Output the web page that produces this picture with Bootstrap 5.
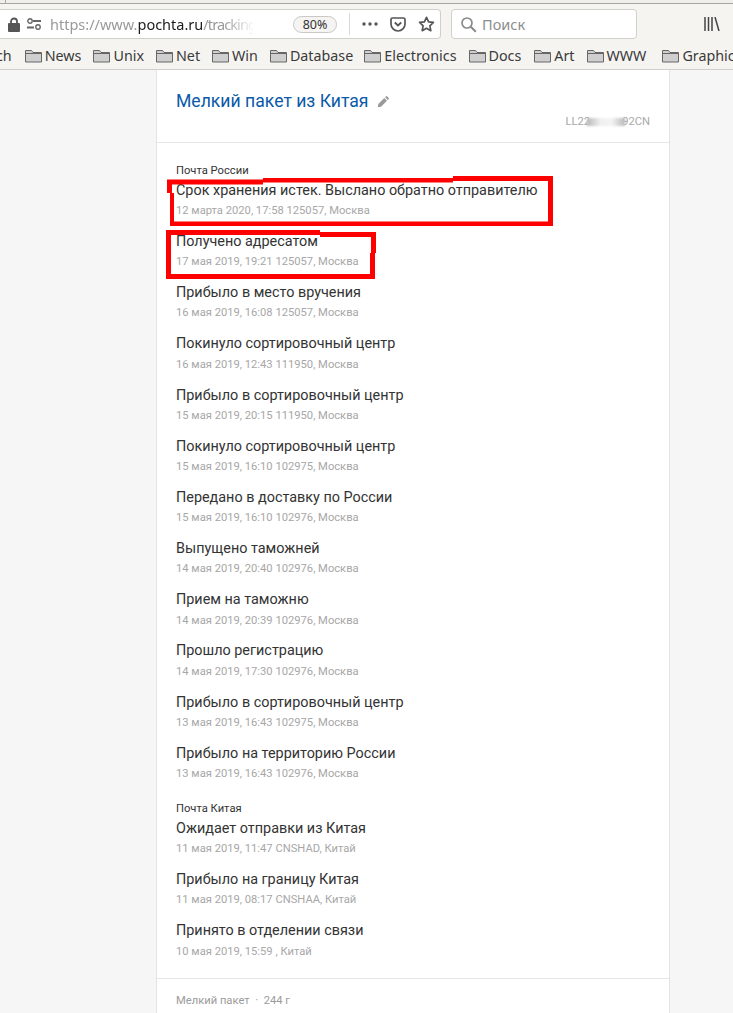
<!DOCTYPE html>
<html lang="ru">
<head>
<meta charset="utf-8">
<title>Почта России</title>
<link href="https://cdn.jsdelivr.net/npm/bootstrap@5.3.0/dist/css/bootstrap.min.css" rel="stylesheet">
<style>
html,body{margin:0;height:1013px;overflow:hidden;background:#f6f6f6;}
.shell{width:733px;height:1013px;position:relative;overflow:hidden;font-family:"Noto Sans",sans-serif;}
.tabstrip{height:4px;background:#f0efec;border-bottom:1px solid #a8a7a3;}
.tabstrip-edge{margin-left:5px;height:3px;border-left:1px solid #a8a7a3;}
.navstrip{height:34px;background:#f5f4f1;padding-top:5px;gap:10px;}
.urlbox{width:441px;height:30px;background:#fff;border:1px solid #d0cfcb;border-radius:0 4px 4px 0;border-left:0;padding-left:8px;color:#9a9a9a;font-size:14.5px;white-space:nowrap;overflow:hidden;}
.urlbox b{font-weight:400;color:#1b1b1b;}
.sliders{margin-left:7px;}
.urltext{width:207px;overflow:hidden;margin-left:9px;padding-top:1px;-webkit-mask-image:linear-gradient(to right,#000 84%,transparent 99%);mask-image:linear-gradient(to right,#000 84%,transparent 99%);}
.urltail{letter-spacing:-.9px;}
.zoompill{width:44px;height:17px;line-height:15px;margin-left:36px;border:1px solid #c9c8c5;border-radius:9px;background:#f5f4f2;color:#333;font-size:12.5px;text-align:center;flex:none;}
.sep{width:1px;height:22px;background:#d8d7d4;margin-left:12px;flex:none;}
.act1{margin-left:12px;flex:none;}
.act2{margin-left:12px;flex:none;}
.act3{margin-left:12px;flex:none;}
.searchbox{width:186px;height:30px;background:#fff;border:1px solid #d0cfcb;border-radius:4px;padding-left:8px;color:#8c8c8c;font-size:14.5px;gap:5px;}
.searchbox span{padding-top:1px;}
.libicon{margin-left:57px;margin-top:8px;}
.bookstrip{height:32px;background:#f5f4f1;border-bottom:1px solid #cfcec9;color:#3a3a3a;font-size:14.3px;white-space:nowrap;overflow:hidden;padding-top:4px;}
.chtail{margin-left:-4px;margin-right:13px;}
.bookmk{gap:3px;margin-right:12px;flex:none;}
.bookmk.tight{margin-right:11px;}
.bookmk.loose{margin-right:13px;}
.bookmk.wide{margin-right:16px;}
.page-area{background:#f6f6f6;height:943px;}
.sheet{width:514px;margin-left:156px;height:943px;background:#fff;border-left:1px solid #e3e3e3;border-right:1px solid #e3e3e3;font-family:Roboto,sans-serif;}
.sheet-head{height:73px;border-bottom:1px solid #e6e6e6;padding:19px 19px 0 19px;}
.sheet-title{color:#0a5aa8;font-size:17.6px;line-height:24px;gap:9px;}
.track{color:#a9a9a9;font-size:11.2px;line-height:13px;margin-top:2px;text-align:right;}
.track i{display:inline-block;width:38px;height:8px;vertical-align:-1px;background:linear-gradient(to right,#b9b9b9,#f0f0f0 35%,#f4f4f4 65%,#b9b9b9);filter:blur(1px);margin:0 -3px;}
.events{padding:21px 19px 0 19px;}
.org{color:#333;font-size:11.2px;line-height:14px;margin-bottom:2.75px;}
.evt{height:51.2px;}
.evt-title{color:#333;font-size:14.4px;line-height:20px;}
.evt-meta{color:#a7a7a7;font-size:11.2px;line-height:14px;margin-top:3.25px;}
.group2{margin-top:7.2px;}
.sheet-foot{margin-top:5.4px;border-top:1px solid #e6e6e6;padding:15px 19px 0;color:#9b9b9b;font-size:11.2px;line-height:14px;}
.marks{position:absolute;left:0;top:0;pointer-events:none;}
</style>
</head>
<body>
<div class="shell">
  <div class="tabstrip"><div class="tabstrip-edge"></div></div>
  <div class="navstrip d-flex">
    <div class="urlbox d-flex align-items-center">
      <svg width="12" height="15" viewBox="0 0 12 15" style="flex:none"><path d="M3 6.500V4.500a3 3 0 0 1 6 0v2" fill="none" stroke="#555" stroke-width="1.800"/><rect x="0" y="6" width="12" height="9" rx="1" fill="#555"/></svg>
      <svg class="sliders" width="14" height="12" viewBox="0 0 14 12" style="flex:none"><circle cx="3" cy="3" r="2.200" fill="none" stroke="#666" stroke-width="1.400"/><path d="M6 3h8M0 9.500h7" stroke="#666" stroke-width="2"/><circle cx="11" cy="9" r="2.200" fill="none" stroke="#666" stroke-width="1.400"/></svg>
      <div class="urltext">https://www.<b>pochta.ru</b><span class="urltail">/tracking</span></div>
      <div class="zoompill">80%</div>
      <div class="sep"></div>
      <svg class="act1" width="16" height="4" viewBox="0 0 16 4"><circle cx="2" cy="2" r="1.700" fill="#555"/><circle cx="8" cy="2" r="1.700" fill="#555"/><circle cx="14" cy="2" r="1.700" fill="#555"/></svg>
      <svg class="act2" width="16" height="15" viewBox="0 0 16 15"><path d="M2.500 1h11A1.500 1.500 0 0 1 15 2.500V7A7 7 0 0 1 1 7V2.500A1.500 1.500 0 0 1 2.500 1z" fill="none" stroke="#555" stroke-width="1.700"/><path d="M4.800 5.500l3.200 3 3.200-3" fill="none" stroke="#555" stroke-width="1.800"/></svg>
      <svg class="act3" width="17" height="16" viewBox="0 0 17 16"><path d="M8.500 1.300l2.100 4.500 4.800.6-3.500 3.400.9 4.900-4.300-2.400-4.300 2.400.9-4.900L1.600 6.400l4.800-.6z" fill="none" stroke="#555" stroke-width="1.700" stroke-linejoin="round"/></svg>
    </div>
    <div class="searchbox d-flex align-items-center">
      <svg width="17" height="17" viewBox="0 0 17 17"><circle cx="7" cy="7" r="5" fill="none" stroke="#8a8a8a" stroke-width="1.700"/><path d="M10.800 10.800l5 5" stroke="#8a8a8a" stroke-width="2"/></svg>
      <span>Поиск</span>
    </div>
    <svg class="libicon" width="16" height="14" viewBox="0 0 16 14"><path d="M1 0v14M4.500 0v14M8 0v14M11 0l4 14" stroke="#444" stroke-width="1.500" fill="none"/></svg>
  </div>
  <div class="bookstrip d-flex align-items-center">
    <span class="chtail">ch</span>
    <span class="bookmk d-flex align-items-center"><svg width="17" height="14" viewBox="0 0 17 14"><path d="M.5 13V1.500h6l1.500 2h8.500V13z" fill="#cfcfcf" stroke="#666"/><path d="M.5 4.500h16" stroke="#666"/></svg>News</span>
    <span class="bookmk d-flex align-items-center"><svg width="17" height="14" viewBox="0 0 17 14"><path d="M.5 13V1.500h6l1.500 2h8.500V13z" fill="#cfcfcf" stroke="#666"/><path d="M.5 4.500h16" stroke="#666"/></svg>Unix</span>
    <span class="bookmk d-flex align-items-center"><svg width="17" height="14" viewBox="0 0 17 14"><path d="M.5 13V1.500h6l1.500 2h8.500V13z" fill="#cfcfcf" stroke="#666"/><path d="M.5 4.500h16" stroke="#666"/></svg>Net</span>
    <span class="bookmk d-flex align-items-center"><svg width="17" height="14" viewBox="0 0 17 14"><path d="M.5 13V1.500h6l1.500 2h8.500V13z" fill="#cfcfcf" stroke="#666"/><path d="M.5 4.500h16" stroke="#666"/></svg>Win</span>
    <span class="bookmk tight d-flex align-items-center"><svg width="17" height="14" viewBox="0 0 17 14"><path d="M.5 13V1.500h6l1.500 2h8.500V13z" fill="#cfcfcf" stroke="#666"/><path d="M.5 4.500h16" stroke="#666"/></svg>Database</span>
    <span class="bookmk d-flex align-items-center"><svg width="17" height="14" viewBox="0 0 17 14"><path d="M.5 13V1.500h6l1.500 2h8.500V13z" fill="#cfcfcf" stroke="#666"/><path d="M.5 4.500h16" stroke="#666"/></svg>Electronics</span>
    <span class="bookmk loose d-flex align-items-center"><svg width="17" height="14" viewBox="0 0 17 14"><path d="M.5 13V1.500h6l1.500 2h8.500V13z" fill="#cfcfcf" stroke="#666"/><path d="M.5 4.500h16" stroke="#666"/></svg>Docs</span>
    <span class="bookmk d-flex align-items-center"><svg width="17" height="14" viewBox="0 0 17 14"><path d="M.5 13V1.500h6l1.500 2h8.500V13z" fill="#cfcfcf" stroke="#666"/><path d="M.5 4.500h16" stroke="#666"/></svg>Art</span>
    <span class="bookmk wide d-flex align-items-center"><svg width="17" height="14" viewBox="0 0 17 14"><path d="M.5 13V1.500h6l1.500 2h8.500V13z" fill="#cfcfcf" stroke="#666"/><path d="M.5 4.500h16" stroke="#666"/></svg>WWW</span>
    <span class="bookmk d-flex align-items-center"><svg width="17" height="14" viewBox="0 0 17 14"><path d="M.5 13V1.500h6l1.500 2h8.500V13z" fill="#cfcfcf" stroke="#666"/><path d="M.5 4.500h16" stroke="#666"/></svg>Graphics</span>
  </div>
  <div class="page-area">
    <div class="sheet">
      <div class="sheet-head">
        <div class="sheet-title d-flex align-items-center">Мелкий пакет из Китая
          <svg width="13" height="13" viewBox="0 0 13 13"><path d="M9.500.8l2.700 2.700-1.400 1.400-2.700-2.700zM7.300 3l2.700 2.700-6 6L.8 12.200l.5-3.200z" fill="#9a9a9a"/></svg>
        </div>
        <div class="track">LL22<i></i>92CN</div>
      </div>
      <div class="events">
        <div class="org">Почта России</div>
        <div class="evt"><div class="evt-title">Срок хранения истек. Выслано обратно отправителю</div><div class="evt-meta">12 марта 2020, 17:58 125057, Москва</div></div>
        <div class="evt"><div class="evt-title">Получено адресатом</div><div class="evt-meta">17 мая 2019, 19:21 125057, Москва</div></div>
        <div class="evt"><div class="evt-title">Прибыло в место вручения</div><div class="evt-meta">16 мая 2019, 16:08 125057, Москва</div></div>
        <div class="evt"><div class="evt-title">Покинуло сортировочный центр</div><div class="evt-meta">16 мая 2019, 12:43 111950, Москва</div></div>
        <div class="evt"><div class="evt-title">Прибыло в сортировочный центр</div><div class="evt-meta">15 мая 2019, 20:15 111950, Москва</div></div>
        <div class="evt"><div class="evt-title">Покинуло сортировочный центр</div><div class="evt-meta">15 мая 2019, 16:10 102975, Москва</div></div>
        <div class="evt"><div class="evt-title">Передано в доставку по России</div><div class="evt-meta">15 мая 2019, 16:10 102976, Москва</div></div>
        <div class="evt"><div class="evt-title">Выпущено таможней</div><div class="evt-meta">14 мая 2019, 20:40 102976, Москва</div></div>
        <div class="evt"><div class="evt-title">Прием на таможню</div><div class="evt-meta">14 мая 2019, 20:39 102976, Москва</div></div>
        <div class="evt"><div class="evt-title">Прошло регистрацию</div><div class="evt-meta">14 мая 2019, 17:30 102976, Москва</div></div>
        <div class="evt"><div class="evt-title">Прибыло в сортировочный центр</div><div class="evt-meta">13 мая 2019, 16:43 102975, Москва</div></div>
        <div class="evt"><div class="evt-title">Прибыло на территорию России</div><div class="evt-meta">13 мая 2019, 16:43 102976, Москва</div></div>
        <div class="org group2">Почта Китая</div>
        <div class="evt"><div class="evt-title">Ожидает отправки из Китая</div><div class="evt-meta">11 мая 2019, 11:47 CNSHAD, Китай</div></div>
        <div class="evt"><div class="evt-title">Прибыло на границу Китая</div><div class="evt-meta">11 мая 2019, 08:17 CNSHAA, Китай</div></div>
        <div class="evt"><div class="evt-title">Принято в отделении связи</div><div class="evt-meta">10 мая 2019, 15:59 , Китай</div></div>
      </div>
      <div class="sheet-foot">Мелкий пакет &nbsp;·&nbsp; 244 г</div>
    </div>
  </div>
  <svg class="marks" width="733" height="300" viewBox="0 0 733 300">
    <path fill="#f00" fill-rule="evenodd" d="M167 179.500H263V178H453V176H553V226H170V193H167ZM172 184.500V193H174V221.500H548V181H453V182.500H263V184.500Z"/>
    <path fill="#f00" fill-rule="evenodd" d="M166 230H320V232H376V253H375V279H166ZM171 235V274H370V253H371V237H320V235Z"/>
  </svg>
</div>
</body>
</html>
